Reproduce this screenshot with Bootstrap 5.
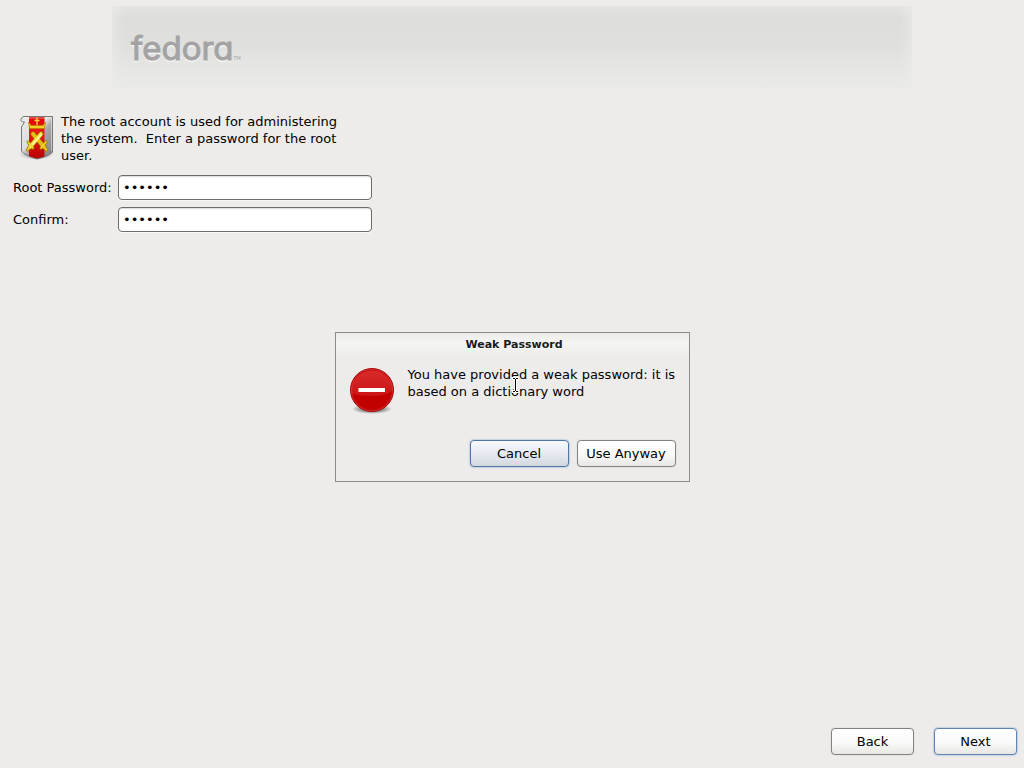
<!DOCTYPE html>
<html lang="en">
<head>
<meta charset="utf-8">
<meta name="viewport" content="width=device-width, initial-scale=1">
<title>Fedora installer - Root Password</title>
<link href="https://cdn.jsdelivr.net/npm/bootstrap@5.3.0/dist/css/bootstrap.min.css" rel="stylesheet">
<style>
body { background: #edeceb; color: #000; font: 13px/17px "DejaVu Sans", sans-serif; }
.banner {
  width: 100%; max-width: 800px; height: 90px; margin-top: 6px; padding: 22px 19px 28px;
  background: linear-gradient(#e4e4e2, #dddddb 12px, #dfdfdd 38px, #e4e4e3 56px, #e9e9e8 76px, #edeceb);
  position: relative;
}
.banner::before {
  content: ""; position: absolute; inset: 0;
  background: linear-gradient(90deg, #edeceb88, #edeceb00 12px, #edeceb00 calc(100% - 12px), #edeceb88);
}
.brand-word {
  font: 400 33px/40px Inter, sans-serif; font-feature-settings: "cv11"; color: #a3a3a3;
  -webkit-text-stroke: 1px #a3a3a3; text-shadow: 0 2px 1px #f6f6f6; position: relative;
}
.brand-tm { font: 5px/20px "DejaVu Sans", sans-serif; color: #a3a3a3; position: relative; }
.account { max-width: 380px; padding: 17px 8px 0 13px; }
.intro { max-width: 290px; }
.fields { display: grid; grid-template-columns: 98px 1fr; gap: 7px; align-items: center; margin-top: 11px; }
.entry {
  height: 25px; min-height: 0; padding: 0 4px; border: 1px solid #6f6b66; border-radius: 4px;
  background: #fff; box-shadow: inset 0 1px 1px #ddd, 0 1px 0 #f8f8f8; color: #000; font: inherit;
}
.push {
  --bs-btn-padding-x: 4px; --bs-btn-padding-y: 0; --bs-btn-border-radius: 4px; --bs-btn-line-height: 17px;
  --bs-btn-font-size: 13px; --bs-btn-color: #000; --bs-btn-border-color: #85827e;
  height: 27px; background: linear-gradient(#fff, #f9f9f8 55%, #e7e6e4); box-shadow: 0 0 1px #aaa;
}
.push-default { --bs-btn-border-color: #5f82b0; box-shadow: 0 0 2px #6d98d0; }
.push-focus { --bs-btn-border-color: #4f75a8; background: linear-gradient(#f7fafe, #e6eaf0 50%, #d3d8df); }
.nav-push { width: 83px; }
.dialog-push { width: 99px; }
.footer-actions { gap: 20px; padding: 0 7px 13px 0; }
.overlay { padding-top: 46px; pointer-events: none; }
.alert-box { width: 355px; min-height: 150px; border: 1px solid #8c8b89; background: #edeceb; pointer-events: auto; }
.alert-title {
  margin: 0; padding: 3px 0 2px 4px; height: 24px; text-align: center; color: #1a1a1a;
  font: bold 11px/17px "DejaVu Sans", sans-serif; text-shadow: 0 1px 0 #fff;
  background: linear-gradient(#edeceb, #f5f5f4 10px, #edeceb);
}
.alert-main { gap: 12px; padding: 9px 8px 0 12px; }
.alert-actions { gap: 8px; padding: 26px 13px 14px; }
.alert-text { position: relative; }
.caret-pointer { position: absolute; left: 103px; top: 11px; }
</style>
</head>
<body>
<div class="d-flex flex-column min-vh-100 position-relative">
  <header class="banner mx-auto d-flex align-items-end">
    <span class="brand-word">fedora</span><span class="brand-tm">TM</span>
  </header>
  <main class="flex-grow-1">
    <form class="account" id="root-form">
      <div class="d-flex">
        <svg class="flex-shrink-0" width="48" height="48" viewBox="0 0 48 48" aria-hidden="true">
          <defs>
            <linearGradient id="steel" x2="1" y2="1"><stop stop-color="#eee"/><stop offset=".45" stop-color="#ddd"/><stop offset=".55" stop-color="#aaa"/><stop offset="1" stop-color="#777"/></linearGradient>
            <linearGradient id="red" x2="0" y2="1"><stop stop-color="#d00"/><stop offset=".4" stop-color="#f01818"/><stop offset="1" stop-color="#b50000"/></linearGradient>
            <radialGradient id="shade"><stop stop-color="#555"/><stop offset=".6" stop-color="#777" stop-opacity=".7"/><stop offset="1" stop-color="#777" stop-opacity="0"/></radialGradient>
            <clipPath id="shieldClip"><path d="M10 3.500H39.500V39Q37 43 24 46Q12 43 8.500 38V14L11.500 9Q7 9 8 6Z"/></clipPath>
          </defs>
          <ellipse cx="23" cy="41" rx="18" ry="6" fill="url(#shade)" opacity=".4"/>
          <g clip-path="url(#shieldClip)">
            <path d="M6 2H41V47H6Z" fill="url(#steel)"/>
            <path d="M16 2H31.500V47H16Z" fill="url(#red)"/>
          </g>
          <path d="M10 3.500H39.500V39Q37 43 24 46Q12 43 8.500 38V14L11.500 9Q7 9 8 6Z" fill="none" stroke="#777"/>
          <path d="M10.500 5H38.500V38" fill="none" stroke="#fff" stroke-opacity=".5"/>
          <path d="M15.500 9L18 12.500H30L32.500 9L31.500 15.500H16.500Z" fill="#f4cf24" stroke="#b88500" stroke-width=".8"/>
          <path d="M24 4.500V12M21.500 7.500H26.500" stroke="#ffd83a" stroke-width="1.300"/>
          <g stroke-linecap="round" fill="none">
            <path d="M20 21L31 34M28 21L17 34" stroke="#9c7100" stroke-width="5"/>
            <path d="M15 29L20 35M33 29L28 35M16 35L14.500 37M32 35L33.500 37" stroke="#a87d00" stroke-width="3"/>
            <path d="M20 21L31 34" stroke="#e5bf15" stroke-width="3.600"/>
            <path d="M28 21L17 34" stroke="#f7e246" stroke-width="3.600"/>
            <path d="M28 22L20 31" stroke="#fffbc0" stroke-width="1.200"/>
            <path d="M15 29L20 35M33 29L28 35M16 35L14.500 37M32 35L33.500 37" stroke="#f3d32c" stroke-width="1.600"/>
          </g>
        </svg>
        <p class="intro mb-0">The root account is used for administering the system.&nbsp; Enter a password for the root user.</p>
      </div>
      <div class="fields">
        <label for="pw" class="text-nowrap">Root Password:</label>
        <input type="password" id="pw" class="form-control entry" value="abcdef">
        <label for="pw2">Confirm:</label>
        <input type="password" id="pw2" class="form-control entry" value="abcdef">
      </div>
    </form>
  </main>
  <footer class="d-flex justify-content-end footer-actions">
    <button type="button" class="btn push nav-push">Back</button>
    <button type="submit" form="root-form" class="btn push push-default nav-push">Next</button>
  </footer>
  <div class="overlay position-absolute top-0 start-0 w-100 h-100 d-flex align-items-center justify-content-center">
    <section class="alert-box" role="alertdialog" aria-labelledby="alert-title" aria-describedby="alert-text">
      <h1 class="alert-title" id="alert-title">Weak Password</h1>
      <div class="d-flex alert-main">
        <svg class="flex-shrink-0" width="48" height="48" viewBox="0 0 48 48" aria-hidden="true">
          <defs>
            <linearGradient id="gloss" x2="0" y2="1"><stop stop-color="#d82a2a"/><stop offset="1" stop-color="#cc1414"/></linearGradient>
          </defs>
          <ellipse cx="24" cy="43" rx="20" ry="5" fill="url(#shade)"/>
          <circle cx="24" cy="24" r="21.500" fill="#c20000" stroke="#a80b0b"/>
          <path d="M3 27A21 21 0 1 1 45 24Q39 30 24 30Q9 30 3 27Z" fill="url(#gloss)"/>
          <circle cx="24" cy="24" r="20.500" fill="none" stroke="#e35151" stroke-opacity=".5"/>
          <path d="M10.500 22H37V26H10.500Z" fill="#fff"/>
        </svg>
        <div class="alert-text">
          <p class="mb-0" id="alert-text">You have provided a weak password: it is based on a dictionary word</p>
          <svg class="caret-pointer" width="9" height="17" viewBox="0 0 9 17" aria-hidden="true">
            <path d="M1 1.500H8M4.500 2V15M1 14.500H8" fill="none" stroke="#fff" stroke-width="3"/>
            <path d="M2 1.500H4M5 1.500H7M4.500 2V14M2 14.500H4M5 14.500H7" fill="none" stroke="#000"/>
          </svg>
        </div>
      </div>
      <div class="d-flex justify-content-end alert-actions">
        <button type="button" class="btn push push-default push-focus dialog-push">Cancel</button>
        <button type="button" class="btn push dialog-push">Use Anyway</button>
      </div>
    </section>
  </div>
</div>
<script src="https://cdn.jsdelivr.net/npm/bootstrap@5.3.0/dist/js/bootstrap.bundle.min.js"></script>
</body>
</html>
